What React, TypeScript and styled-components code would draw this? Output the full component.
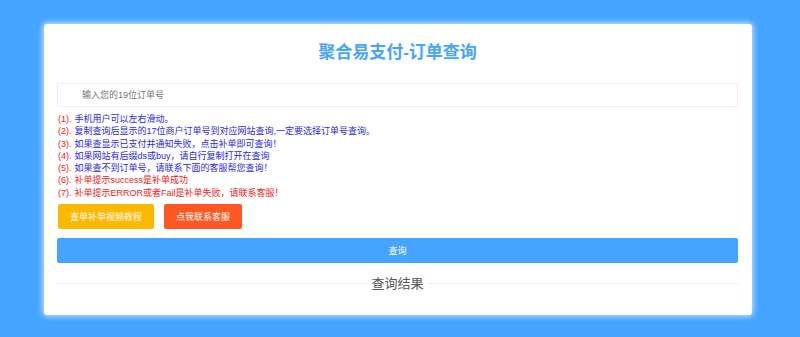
import React from "react";
import styled, { createGlobalStyle } from "styled-components";

const GlobalStyle = createGlobalStyle`
  html, body {
    margin: 0;
    padding: 0;
    background: #44a4ff;
    font-family: "Liberation Sans", "Noto Sans CJK SC", sans-serif;
  }
`;

const Page = styled.div`
  min-height: 337px;
  padding: 24px 0 0 44px;
  box-sizing: border-box;
`;

const Card = styled.div`
  width: 708px;
  height: 291px;
  box-sizing: border-box;
  padding: 0 14px 0 13px;
  background: #fff;
  border-radius: 3px;
  box-shadow: 0 0 6px 1px rgba(255, 255, 255, 0.75);
  display: flex;
  flex-direction: column;
`;

const Title = styled.h1`
  margin: 17px 0 0;
  font-size: 17px;
  line-height: 24px;
  font-weight: bold;
  color: #45a4ff;
  text-align: center;
`;

const OrderInput = styled.input`
  margin-top: 18px;
  height: 24px;
  box-sizing: border-box;
  border: 1px solid #eee;
  border-radius: 2px;
  padding: 0 0 0 24px;
  font-family: inherit;
  font-size: 9px;
  color: #333;
  outline: none;

  &::placeholder {
    color: #757575;
  }
`;

const Tips = styled.ul`
  list-style: none;
  margin: 6px 0 0;
  padding: 0 0 0 1px;
`;

const Tip = styled.li<{ $alert?: boolean }>`
  font-size: 9px;
  line-height: 12.25px;
  color: ${(p) => (p.$alert ? "#f02020" : "#2828e8")};
  white-space: nowrap;
`;

const Num = styled.span`
  color: #f02020;
  margin-right: 3px;
`;

const ButtonRow = styled.div`
  display: flex;
  gap: 10px;
  margin-top: 5px;
  padding-left: 1px;
`;

const ActionBtn = styled.button<{ $tone: "warm" | "danger" }>`
  height: 25px;
  padding: 0 12px;
  border: none;
  border-radius: 2px;
  font-family: inherit;
  font-size: 9px;
  color: #fff;
  background: ${(p) => (p.$tone === "warm" ? "#ffb800" : "#ff5722")};
  cursor: pointer;
`;

const QueryBtn = styled.button`
  margin-top: 9px;
  height: 25px;
  border: none;
  border-radius: 2px;
  background: #45a4ff;
  color: #fff;
  font-family: inherit;
  font-size: 9px;
  cursor: pointer;
`;

const ResultHead = styled.div`
  margin-top: 12px;
  display: flex;
  align-items: center;
  gap: 4px;
  font-size: 13px;
  line-height: 18px;
  color: #555;

  &::before,
  &::after {
    content: "";
    flex: 1;
    height: 1px;
    background: #eee;
  }
`;

const tips: { num: string; text: string; alert?: boolean }[] = [
  { num: "(1).", text: "手机用户可以左右滑动。" },
  { num: "(2).", text: "复制查询后显示的17位商户订单号到对应网站查询,一定要选择订单号查询。" },
  { num: "(3).", text: "如果查显示已支付并通知失败，点击补单即可查询！" },
  { num: "(4).", text: "如果网站有后缀ds或buy，请自行复制打开在查询" },
  { num: "(5).", text: "如果查不到订单号，请联系下面的客服帮您查询！" },
  { num: "(6).", text: "补单提示success是补单成功", alert: true },
  { num: "(7).", text: "补单提示ERROR或者Fail是补单失败，请联系客服！", alert: true },
];

export default function App() {
  return (
    <>
      <GlobalStyle />
      <Page>
        <Card>
          <Title>聚合易支付-订单查询</Title>
          <OrderInput placeholder="输入您的19位订单号" />
          <Tips>
            {tips.map((t) => (
              <Tip key={t.num} $alert={t.alert}>
                <Num>{t.num}</Num>
                {t.text}
              </Tip>
            ))}
          </Tips>
          <ButtonRow>
            <ActionBtn $tone="warm">查单补单视频教程</ActionBtn>
            <ActionBtn $tone="danger">点我联系客服</ActionBtn>
          </ButtonRow>
          <QueryBtn>查询</QueryBtn>
          <ResultHead>查询结果</ResultHead>
        </Card>
      </Page>
    </>
  );
}
